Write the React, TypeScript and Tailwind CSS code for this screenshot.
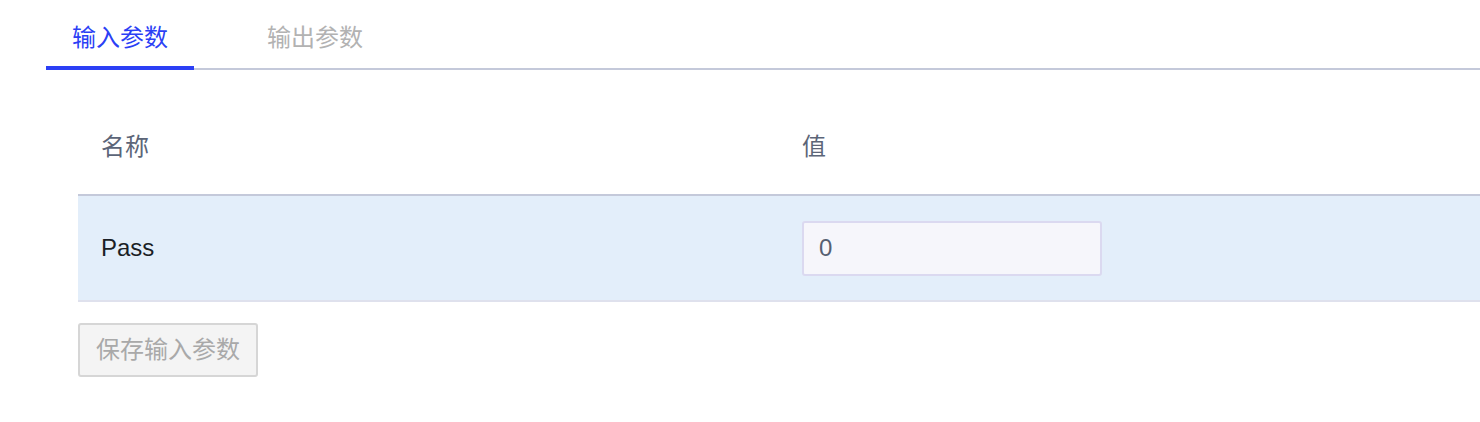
import { useState } from "react";

//input / output param editor
const tabs = ["输入参数", "输出参数"];

const params = [{ name: "Pass", value: "0" }];

const App = () => {
  const [active, setActive] = useState(0);

  return (
    <div
      className="min-h-screen w-full bg-white pl-[46px]"
      style={{ fontFamily: '"Liberation Sans", "Noto Sans CJK SC", sans-serif' }}
    >
      {/* tab bar */}
      <div className="flex items-end gap-[47px] border-b-2 border-[#c4c9da]">
        {tabs.map((tab, i) => (
          <button
            key={tab}
            onClick={() => setActive(i)}
            className={
              i === active
                ? "-mb-[2px] w-[148px] border-b-4 border-[#2b3ff5] pt-[24px] pb-[14px] text-[24px] leading-[28px] text-[#2b3ff5]"
                : "-mb-[2px] w-[148px] border-b-4 border-transparent pt-[24px] pb-[14px] text-[24px] leading-[28px] text-[#b2b2b2]"
            }
          >
            {tab}
          </button>
        ))}
      </div>

      <div className="ml-[32px] mt-[30px]">
        {/* table header */}
        <div className="grid h-[96px] grid-cols-[724px_1fr] items-center border-b-2 border-[#c4c9da] text-[24px] text-[#5c6578]">
          <div className="pl-[23px]">名称</div>
          <div>值</div>
        </div>

        {/* rows */}
        {params.map((p) => (
          <div
            key={p.name}
            className="grid h-[106px] grid-cols-[724px_1fr] items-center border-b-2 border-[#dfe1ed] bg-[#e3eefa] text-[24px]"
          >
            <div className="pl-[23px] text-[#1b1f26]">{p.name}</div>
            <div>
              <input
                defaultValue={p.value}
                className="h-[55px] w-[300px] rounded-[3px] border-2 border-[#dbd9f0] bg-[#f6f6fb] px-[15px] text-[24px] text-[#566072] outline-none"
              />
            </div>
          </div>
        ))}

        <button
          disabled
          className="mt-[21px] h-[54px] w-[180px] rounded-[3px] border-2 border-[#d6d6d6] bg-[#f4f4f4] text-[24px] text-[#a9a9a9]"
        >
          保存输入参数
        </button>
      </div>
    </div>
  );
};

export default App;
